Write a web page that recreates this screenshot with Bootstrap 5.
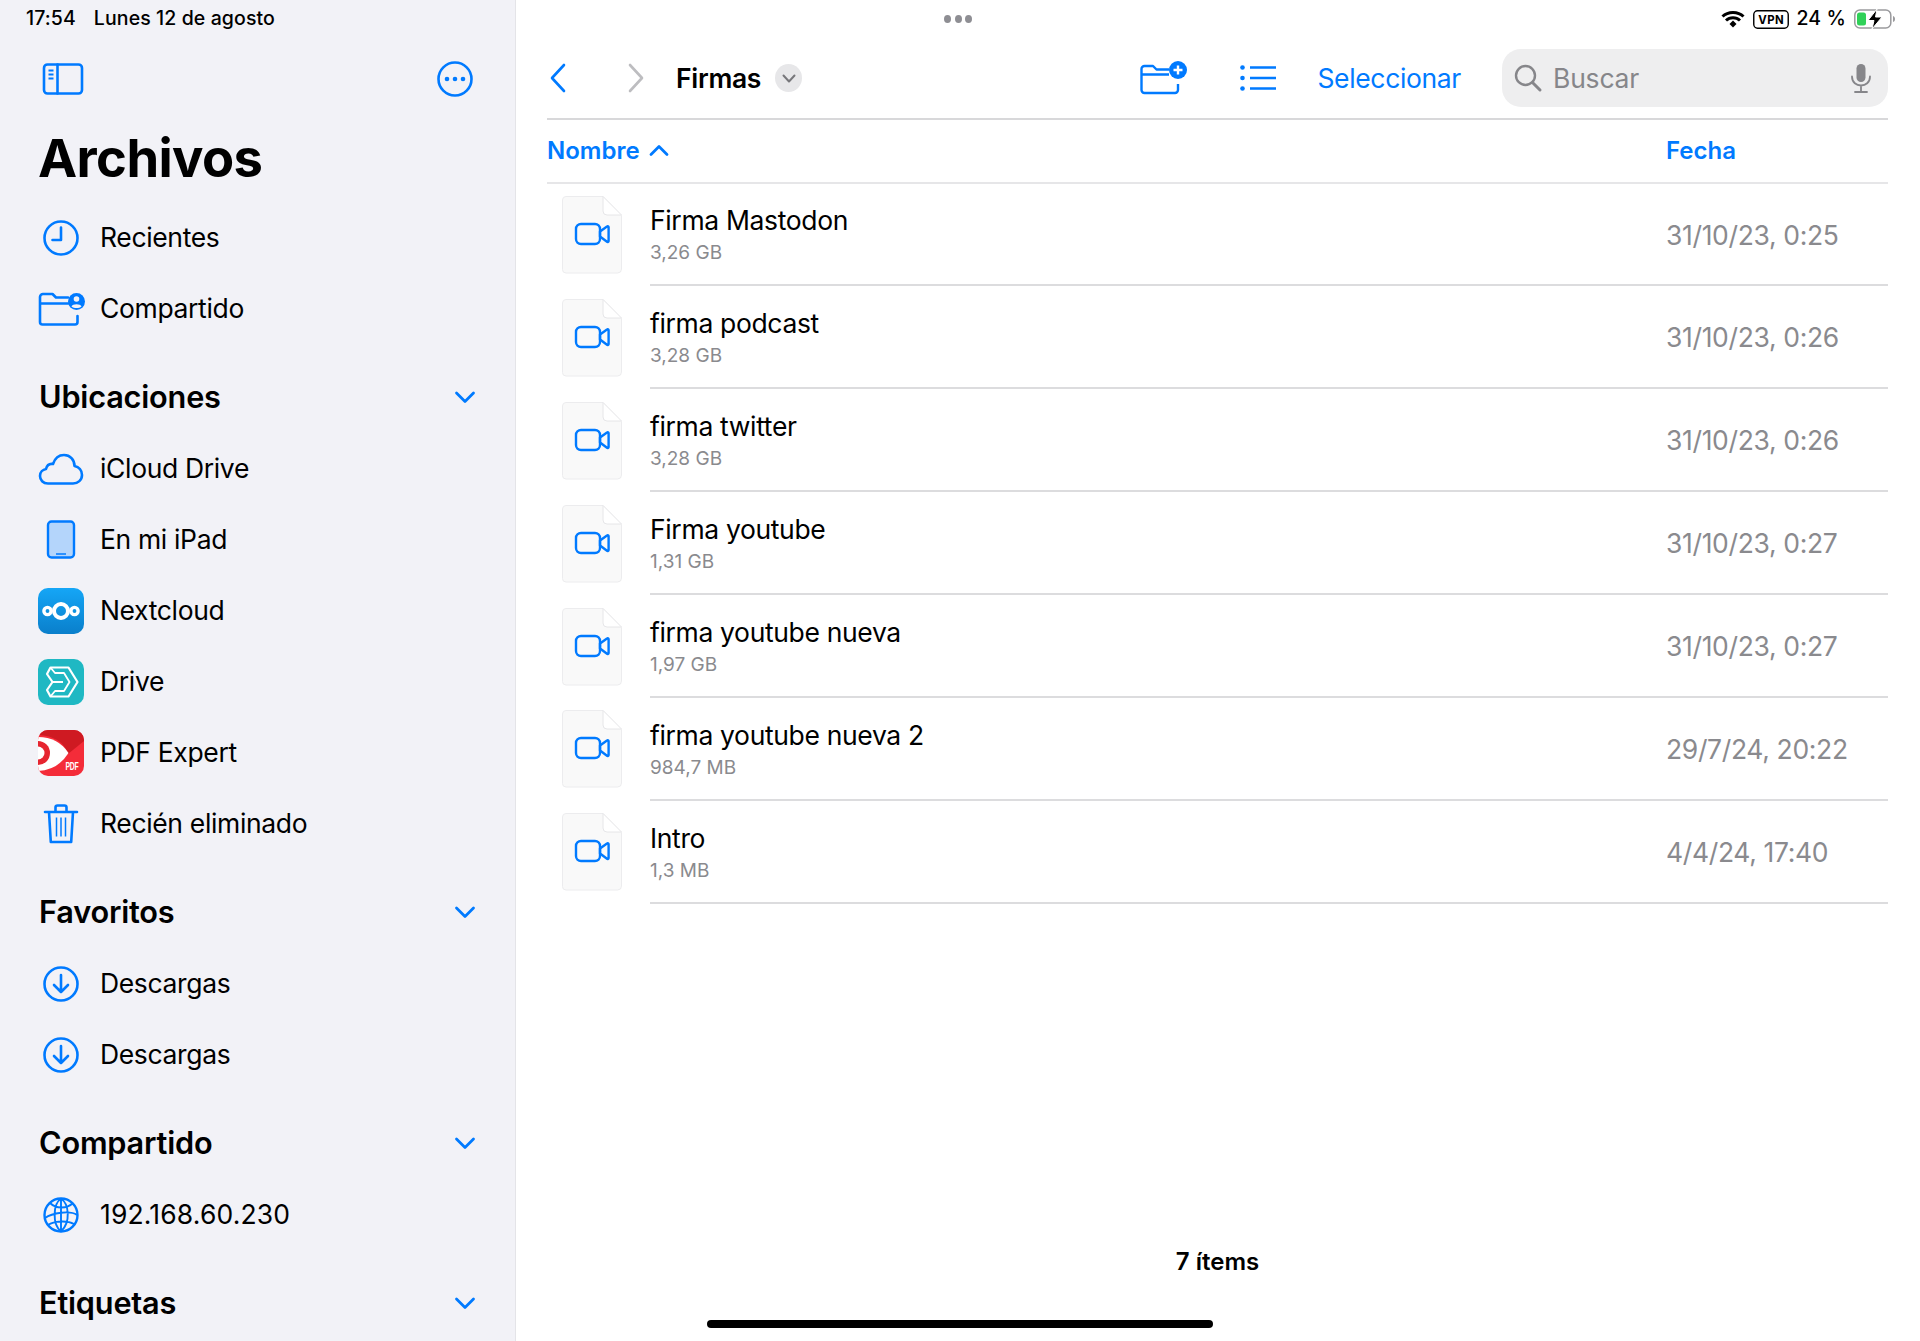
<!DOCTYPE html>
<html lang="es">
<head>
<meta charset="utf-8">
<title>Archivos</title>
<link href="https://cdn.jsdelivr.net/npm/bootstrap@5.3.0/dist/css/bootstrap.min.css" rel="stylesheet">
<style>
html,body{height:1341px;overflow:hidden;background:#fff;}
body{font-family:Inter,"Liberation Sans",sans-serif;color:#000;}
:root{--ios:#007aff;}
svg{display:block;overflow:visible;flex:none;}
.ln{fill:none;stroke:var(--ios);stroke-width:2.6;stroke-linecap:round;stroke-linejoin:round;}
.app{height:1341px;position:relative;}
.side{width:516px;flex:none;background:#f2f2f7;border-right:1px solid #e4e4e8;}
.stat{height:38px;font-size:19.500px;font-weight:500;letter-spacing:.1px;}
.side .stat{padding-left:26px;gap:18px;}
.side-tool{height:82px;padding:0 42px 0 43px;}
.big{height:82px;margin:0;padding-left:38px;font-size:52.500px;font-weight:700;line-height:76px;letter-spacing:-.6px;}
.it{height:71px;padding-left:38px;gap:16px;font-size:26.500px;letter-spacing:-.35px;}
.it span{padding-top:1px;}
.it .ip{letter-spacing:.15px;}
.sec{height:89px;padding:17px 39px 0 39px;}
.sec h2{margin:0;font-size:30.700px;font-weight:600;letter-spacing:-.2px;}
.pane{min-width:0;padding-left:31px;padding-right:32px;}
.stat-r{gap:8px;margin-right:-8px;font-size:19.500px;}
.dots{position:absolute;left:944px;top:15px;gap:3.500px;}
.dots i{width:7px;height:8px;border-radius:50%;background:#8e8e93;display:block;}
.pane-tool{height:82px;border-bottom:2px solid #d8d8da;}
.bk{margin-left:2px;}
.fwd{margin-left:60px;}
.lst{margin-left:53px;}
.fold{font-size:26.500px;font-weight:600;letter-spacing:-.3px;margin-left:31px;padding-top:2px;}
.pill{width:27px;height:28px;border-radius:50%;background:#e7e7e9;margin-left:14px;}
.sel{color:var(--ios);font-size:26.500px;letter-spacing:-.35px;margin-left:41px;margin-right:41px;padding-top:2px;}
.find{width:386px;height:58px;background:#eeeeef;border-radius:19px;padding:0 17px 0 12px;color:#86868a;font-size:26.500px;letter-spacing:-.2px;gap:11px;}
.find>span{padding-top:2px;}
.hdr{height:63.500px;border-bottom:2px solid #e6e6e8;color:var(--ios);font-size:24px;font-weight:600;}
.hdr .n{gap:9px;}
.hdr .dc{margin-left:auto;width:222px;}
.fil{height:102.900px;padding-left:15px;gap:28px;}
.fil .bd{height:100%;border-bottom:2px solid #dcdcde;padding-top:3px;}
.fil .nm{font-size:26.500px;line-height:33px;letter-spacing:-.35px;margin-top:-1px;}
.fil .sz{font-size:19px;line-height:24px;color:#8a8a8e;margin-top:4px;}
.fil .dt{width:222px;color:#8a8a8e;font-size:26.500px;letter-spacing:-.35px;}
.cnt{font-size:24px;font-weight:600;position:absolute;left:547px;right:32px;top:1244px;text-align:center;}
.homebar{position:absolute;left:707px;top:1320px;width:506px;height:8px;border-radius:4px;background:#000;}
</style>
</head>
<body>
<svg width="0" height="0" class="position-absolute">
<defs>
<symbol id="dl" viewBox="0 0 46 46"><circle class="ln" cx="23" cy="23" r="16.500"/><path class="ln" d="M23 14v17M16 24l7 7 7-7"/></symbol>
<symbol id="chev" viewBox="0 0 22 14"><path d="M2.500 3 11 11.500 19.500 3" fill="none" stroke="#007aff" stroke-width="2.800" stroke-linecap="round" stroke-linejoin="round"/></symbol>
<symbol id="doc" viewBox="0 0 60 78">
<path d="M4 .5H41L59.500 19.500V73a4 4 0 0 1-4 4H4a3.500 3.500 0 0 1-3.500-3.500V4A3.500 3.500 0 0 1 4 .5Z" fill="#f9f9f9" stroke="#ececee"/>
<path d="M41 .5V15a4 4 0 0 0 4 4H59.500Z" fill="#fff" stroke="#e6e6e8"/>
<rect x="14" y="28" width="24" height="20" rx="5" fill="none" stroke="#007aff" stroke-width="2.400"/>
<path d="M38 35.500 45 30.500a1 1 0 0 1 1.600.8V45a1 1 0 0 1-1.600.8L38 40.500Z" fill="none" stroke="#007aff" stroke-width="2.400" stroke-linejoin="round"/>
</symbol>
</defs>
</svg>
<div class="app d-flex">
<aside class="side">
  <div class="stat d-flex align-items-center"><span>17:54</span><span>Lunes 12 de agosto</span></div>
  <div class="side-tool d-flex align-items-center justify-content-between">
    <svg width="40" height="32" viewBox="0 0 40 32"><rect class="ln" x="1" y="1.500" width="38" height="29" rx="3.500"/><path class="ln" d="M14.500 1.500v29"/><path d="M5.500 7.500h5M5.500 11.500h5M5.500 15.500h5" stroke="#007aff" stroke-width="1.800" fill="none"/></svg>
    <svg width="36" height="36" viewBox="0 0 36 36"><circle class="ln" cx="18" cy="18" r="16.500"/><circle cx="10" cy="18" r="2.300" fill="#007aff"/><circle cx="18" cy="18" r="2.300" fill="#007aff"/><circle cx="26" cy="18" r="2.300" fill="#007aff"/></svg>
  </div>
  <h1 class="big">Archivos</h1>

  <div class="it d-flex align-items-center">
    <svg width="46" height="46" viewBox="0 0 46 46"><circle class="ln" cx="23" cy="23" r="16.500"/><path class="ln" d="M23 12.500V25H14.500"/></svg><span>Recientes</span></div>
  <div class="it d-flex align-items-center">
    <svg width="46" height="46" viewBox="0 0 46 46"><path class="ln" d="M2 11a3 3 0 0 1 3-3h9.500l3.500 3.500h12M2 11v25a2.500 2.500 0 0 0 2.500 2.500H37a2.500 2.500 0 0 0 2.500-2.500v-6M2 17.500h28"/><circle cx="38.500" cy="15.500" r="8.500" fill="#007aff"/><circle cx="38.500" cy="13" r="2.800" fill="#f2f2f7"/><path d="M33.500 20.500c1-3 9-3 10 0-2.500 2-7.500 2-10 0Z" fill="#f2f2f7"/></svg><span>Compartido</span></div>

  <div class="sec d-flex align-items-center justify-content-between"><h2>Ubicaciones</h2><svg width="22" height="14"><use href="#chev"/></svg></div>
  <div class="it d-flex align-items-center">
    <svg width="46" height="46" viewBox="0 0 46 46"><path class="ln" d="M10 37.500C5 37.500 2 34 2 30C2 26 5 23.500 8 23C9 19 12 17.500 15 18C17 12 21 9 26 9C32 9 36.500 13.500 36.500 20C41 21 44 24.500 44 29C44 34 40 37.500 35 37.500Z"/></svg><span>iCloud Drive</span></div>
  <div class="it d-flex align-items-center">
    <svg width="46" height="46" viewBox="0 0 46 46"><rect x="10" y="4.500" width="26" height="36" rx="3.500" fill="#b4d5fb" stroke="#007aff" stroke-width="2.400"/><path d="M18 37h10" stroke="#007aff" stroke-width="1.500"/></svg><span>En mi iPad</span></div>
  <div class="it d-flex align-items-center">
    <svg width="46" height="46" viewBox="0 0 46 46"><defs><linearGradient id="nc" x1="0" y1="0" x2="0" y2="1"><stop offset="0" stop-color="#15a6f6"/><stop offset="1" stop-color="#0a7fcb"/></linearGradient></defs><rect width="46" height="46" rx="10" fill="url(#nc)"/><circle cx="23" cy="23" r="7" fill="none" stroke="#fff" stroke-width="4"/><circle cx="9.500" cy="23" r="3.600" fill="none" stroke="#fff" stroke-width="3.400"/><circle cx="36.500" cy="23" r="3.600" fill="none" stroke="#fff" stroke-width="3.400"/></svg><span>Nextcloud</span></div>
  <div class="it d-flex align-items-center">
    <svg width="46" height="46" viewBox="0 0 46 46"><rect width="46" height="46" rx="10" fill="#1fb8c3"/><path d="M9 15L12.500 8.500H30.500L39.500 23L30.500 37.500H12.500L9 31L14.500 23Z" fill="none" stroke="#fff" stroke-width="2.200" stroke-linejoin="round"/><path d="M12.500 8.500L17 14H26L31.500 23L26 32H17L12.500 37.500M14.500 23H25" fill="none" stroke="#fff" stroke-width="1.800" stroke-linejoin="round"/></svg><span>Drive</span></div>
  <div class="it d-flex align-items-center">
    <svg width="46" height="46" viewBox="0 0 46 46"><defs><clipPath id="pc"><rect width="46" height="46" rx="10"/></clipPath></defs><g clip-path="url(#pc)"><rect width="46" height="46" fill="#f42c39"/><path d="M0 0H46V11L30 24Q24 6 0 5Z" fill="#cf1a22"/><path d="M0 7Q20 7 30.500 23Q20 40 0 41Z" fill="#fff"/><path d="M0 11a12 12 0 0 1 0 24Z" fill="#e62530"/><path d="M0 16.500a6.500 6.500 0 0 1 0 13Z" fill="#fff"/><text x="34" y="40" font-family="'Liberation Sans',sans-serif" font-size="11" font-weight="700" fill="#fff" text-anchor="middle" textLength="13" lengthAdjust="spacingAndGlyphs">PDF</text></g></svg><span>PDF Expert</span></div>
  <div class="it d-flex align-items-center">
    <svg width="46" height="46" viewBox="0 0 46 46"><path class="ln" d="M7 11h32M11 11l1.800 30h20.400L35 11M17.500 11V6.500a2 2 0 0 1 2-2h7a2 2 0 0 1 2 2V11" stroke-width="2.200"/><path d="M18.500 16.500v19M23 16.500v19M27.500 16.500v19" stroke="#007aff" stroke-width="1.500" fill="none"/></svg><span>Recién eliminado</span></div>

  <div class="sec d-flex align-items-center justify-content-between"><h2>Favoritos</h2><svg width="22" height="14"><use href="#chev"/></svg></div>
  <div class="it d-flex align-items-center"><svg width="46" height="46"><use href="#dl"/></svg><span>Descargas</span></div>
  <div class="it d-flex align-items-center"><svg width="46" height="46"><use href="#dl"/></svg><span>Descargas</span></div>

  <div class="sec d-flex align-items-center justify-content-between"><h2>Compartido</h2><svg width="22" height="14"><use href="#chev"/></svg></div>
  <div class="it d-flex align-items-center">
    <svg width="46" height="46" viewBox="0 0 46 46"><g fill="none" stroke="#007aff" stroke-width="1.900"><circle cx="23" cy="23" r="16.500" stroke-width="2.400"/><path d="M23 6.500C15 12 14 32 23 39.500M23 6.500C31 12 33 30 23 39.500M12 11c6 6 17 6 23 0M7 26c7-5 25-8 32-3M10 33c6-4 19-5 26-1M23 6.500v33"/></g></svg><span class="ip">192.168.60.230</span></div>

  <div class="sec d-flex align-items-center justify-content-between"><h2>Etiquetas</h2><svg width="22" height="14"><use href="#chev"/></svg></div>
</aside>

<main class="pane flex-grow-1 d-flex flex-column">
  <div class="stat stat-r d-flex align-items-center justify-content-end">
    <svg width="24" height="18" viewBox="0 0 24 18"><path d="M1.500 6.500C7 1 17 1 22.500 6.500M5 10.500c4-3.800 10-3.800 14 0" fill="none" stroke="#000" stroke-width="3"/><path d="M8.500 14 12 10.500 15.500 14 12 17.500Z" fill="#000"/></svg>
    <svg width="36" height="19" viewBox="0 0 38 19" preserveAspectRatio="none"><rect x=".8" y=".8" width="36.400" height="17.400" rx="4" fill="none" stroke="#000" stroke-width="1.500"/><text x="19" y="14" font-family="Inter,sans-serif" font-size="12" font-weight="700" text-anchor="middle" textLength="27">VPN</text></svg>
    <span>24 %</span>
    <svg width="42" height="20" viewBox="0 0 42 20"><rect x=".8" y="1" width="36" height="18" rx="5" fill="none" stroke="#9a9a9d" stroke-width="1.500"/><rect x="3" y="3.500" width="9" height="13" rx="2.500" fill="#30d158"/><path d="M39 7c1.500.5 2 1.500 2 3s-.5 2.500-2 3Z" fill="#9a9a9d"/><path d="M23 0 14 11.500h6L18 20l10-12h-6.500Z" fill="#000" stroke="#fff" stroke-width="1"/></svg>
  </div>
  <div class="dots d-flex"><i></i><i></i><i></i></div>

  <div class="pane-tool d-flex align-items-center">
    <svg width="18" height="30" viewBox="0 0 18 30" class="bk"><path d="M15 2 3 15l12 13" fill="none" stroke="#007aff" stroke-width="2.600" stroke-linecap="round" stroke-linejoin="round"/></svg>
    <svg width="18" height="30" viewBox="0 0 18 30" class="fwd"><path d="M3 2l12 13L3 28" fill="none" stroke="#bdbdc0" stroke-width="2.600" stroke-linecap="round" stroke-linejoin="round"/></svg>
    <span class="fold">Firmas</span>
    <span class="pill d-flex align-items-center justify-content-center"><svg width="14" height="9" viewBox="0 0 14 9"><path d="M1.500 1.500 7 7.500l5.500-6" fill="none" stroke="#77777b" stroke-width="2" stroke-linecap="round" stroke-linejoin="round"/></svg></span>
    <svg width="47" height="34" viewBox="0 0 47 34" class="ms-auto"><path d="M1.500 8a3 3 0 0 1 3-3h8.500l3.500 3.500H29M1.500 8v21a3 3 0 0 0 3 3H35a3 3 0 0 0 3-3v-6M1.500 13.500H29" fill="none" stroke="#007aff" stroke-width="2.400" stroke-linejoin="round"/><circle cx="38" cy="9" r="9" fill="#007aff"/><path d="M38 4.500v9M33.500 9h9" stroke="#fff" stroke-width="2.400"/></svg>
    <svg width="36" height="28" viewBox="0 0 36 28" class="lst"><g fill="#007aff"><circle cx="2.500" cy="3.500" r="2.300"/><circle cx="2.500" cy="14" r="2.300"/><circle cx="2.500" cy="24.500" r="2.300"/></g><path d="M10 3.500h26M10 14h26M10 24.500h26" stroke="#007aff" stroke-width="2.400"/></svg>
    <span class="sel">Seleccionar</span>
    <div class="find d-flex align-items-center">
      <svg width="28" height="28" viewBox="0 0 28 28"><circle cx="11.500" cy="11.500" r="9.500" fill="none" stroke="#86868a" stroke-width="2.400"/><path d="M18.500 18.500 26 26" stroke="#86868a" stroke-width="3" stroke-linecap="round"/></svg>
      <span>Buscar</span>
      <svg width="20" height="29" viewBox="0 0 20 29" class="ms-auto"><rect x="5.500" y="0" width="9" height="18" rx="4.500" fill="#86868a"/><path d="M1 12.500c0 12 18 12 18 0M10 22.500V27.500M4 28h12" fill="none" stroke="#86868a" stroke-width="1.800" stroke-linecap="round"/></svg>
    </div>
  </div>

  <div class="hdr d-flex align-items-center">
    <div class="n d-flex align-items-center"><span>Nombre</span><svg width="20" height="13" viewBox="0 0 20 13"><path d="M2 10.500 10 2.500l8 8" fill="none" stroke="#007aff" stroke-width="2.800" stroke-linecap="round" stroke-linejoin="round"/></svg></div>
    <div class="dc">Fecha</div>
  </div>

  <div class="fil d-flex align-items-center"><svg width="60" height="78"><use href="#doc"/></svg><div class="bd flex-grow-1 d-flex align-items-center"><div class="flex-grow-1"><div class="nm">Firma Mastodon</div><div class="sz">3,26 GB</div></div><div class="dt">31/10/23, 0:25</div></div></div>
  <div class="fil d-flex align-items-center"><svg width="60" height="78"><use href="#doc"/></svg><div class="bd flex-grow-1 d-flex align-items-center"><div class="flex-grow-1"><div class="nm">firma podcast</div><div class="sz">3,28 GB</div></div><div class="dt">31/10/23, 0:26</div></div></div>
  <div class="fil d-flex align-items-center"><svg width="60" height="78"><use href="#doc"/></svg><div class="bd flex-grow-1 d-flex align-items-center"><div class="flex-grow-1"><div class="nm">firma twitter</div><div class="sz">3,28 GB</div></div><div class="dt">31/10/23, 0:26</div></div></div>
  <div class="fil d-flex align-items-center"><svg width="60" height="78"><use href="#doc"/></svg><div class="bd flex-grow-1 d-flex align-items-center"><div class="flex-grow-1"><div class="nm">Firma youtube</div><div class="sz">1,31 GB</div></div><div class="dt">31/10/23, 0:27</div></div></div>
  <div class="fil d-flex align-items-center"><svg width="60" height="78"><use href="#doc"/></svg><div class="bd flex-grow-1 d-flex align-items-center"><div class="flex-grow-1"><div class="nm">firma youtube nueva</div><div class="sz">1,97 GB</div></div><div class="dt">31/10/23, 0:27</div></div></div>
  <div class="fil d-flex align-items-center"><svg width="60" height="78"><use href="#doc"/></svg><div class="bd flex-grow-1 d-flex align-items-center"><div class="flex-grow-1"><div class="nm">firma youtube nueva 2</div><div class="sz">984,7 MB</div></div><div class="dt">29/7/24, 20:22</div></div></div>
  <div class="fil d-flex align-items-center"><svg width="60" height="78"><use href="#doc"/></svg><div class="bd flex-grow-1 d-flex align-items-center"><div class="flex-grow-1"><div class="nm">Intro</div><div class="sz">1,3 MB</div></div><div class="dt">4/4/24, 17:40</div></div></div>
</main>
<div class="cnt">7 ítems</div>
<div class="homebar"></div>
</div>
<script src="https://cdn.jsdelivr.net/npm/bootstrap@5.3.0/dist/js/bootstrap.bundle.min.js"></script>
</body>
</html>
